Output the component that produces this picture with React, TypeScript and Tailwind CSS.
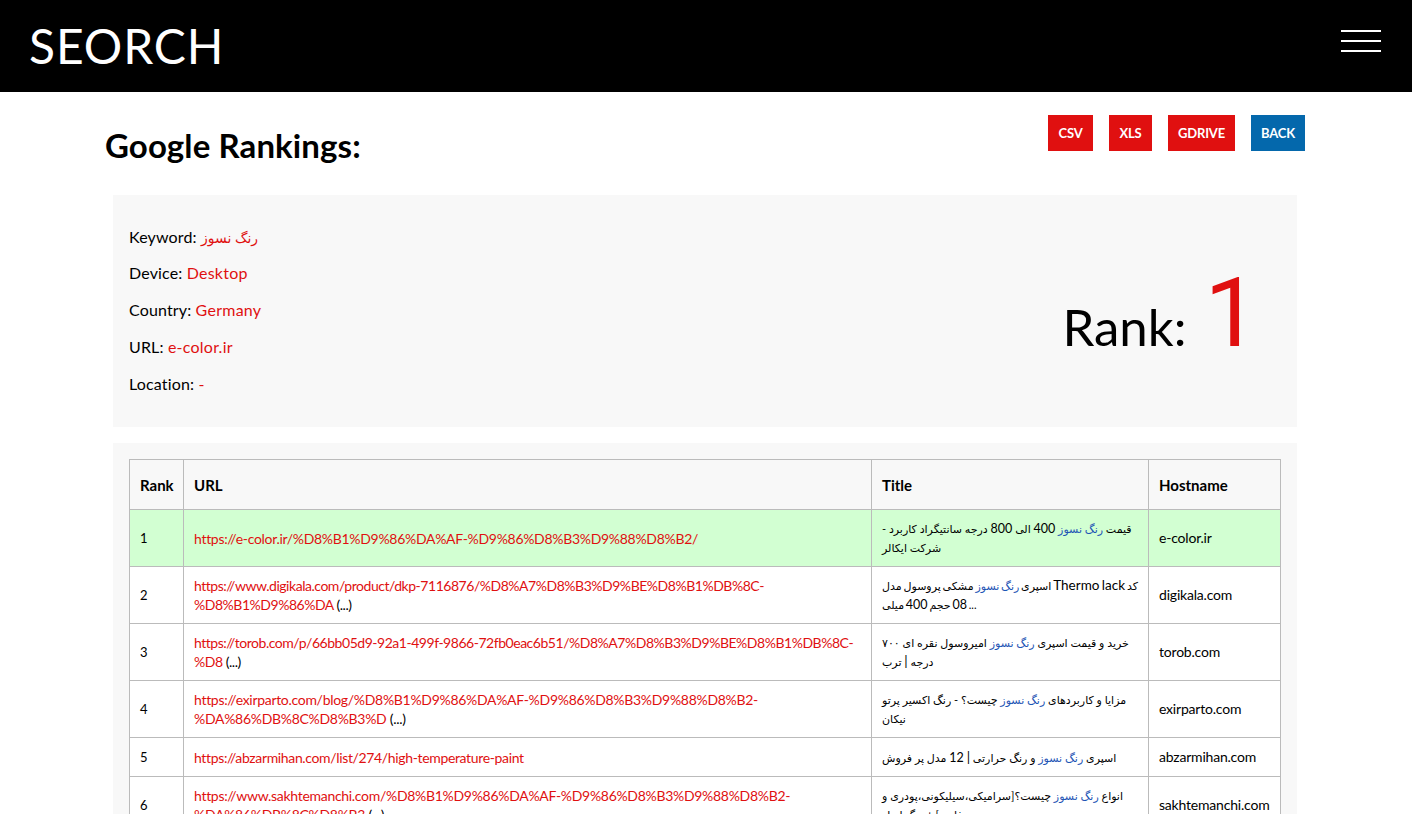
import React from "react";

const F = "font-['Lato','DejaVu_Sans',sans-serif]";
const K = () => <b className="font-normal text-[#1f55b5]">رنگ نسوز</b>;
const N = ({ children, big }: { children: React.ReactNode; big?: boolean }) => (
  <span className={big ? "text-[13.5px]" : "text-[12.5px]"}>{children}</span>
);
const rows: { r: number; title: React.ReactNode; host: string; h: string; bg?: string }[] = [
  { r: 1, title: <>قیمت <K /> <N>400</N> الی <N>800</N> درجه سانتیگراد کاربرد - شرکت ایکالر</>, host: "e-color.ir", h: "h-[57px]", bg: "bg-[#d2ffd2]" },
  { r: 2, title: <span className="whitespace-nowrap [word-spacing:-1px]">اسپری <K /> مشکی پروسول مدل <N big>Thermo lack</N> کد<br />{"\u200f"}<N>08</N> حجم <N>400</N> میلی ...</span>, host: "digikala.com", h: "h-[57px]" },
  { r: 3, title: <>خرید و قیمت اسپری <K /> امیروسول نقره ای ۷۰۰ درجه <N big>|</N> ترب</>, host: "torob.com", h: "h-[57px]" },
  { r: 4, title: <>مزایا و کاربردهای <K /> چیست؟ - رنگ اکسیر پرتو نیکان</>, host: "exirparto.com", h: "h-[57px]" },
  { r: 5, title: <>اسپری <K /> و رنگ حرارتی <N big>|</N> <N>12</N> مدل پر فروش</>, host: "abzarmihan.com", h: "h-[39px]" },
  { r: 6, title: <>انواع <K /> چیست؟[سرامیکی،سیلیکونی،پودری و فلزی] + رنگ ایزار</>, host: "sakhtemanchi.com", h: "h-[57px]" },
];
const urls: [string, string, string][] = [
  ["https://e-color.ir/%D8%B1%D9%86%DA%AF-%D9%86%D8%B3%D9%88%D8%B2/", "", "tracking-[-0.3px]"],
  ["https://www.digikala.com/product/dkp-7116876/%D8%A7%D8%B3%D9%BE%D8%B1%DB%8C-", "%D8%B1%D9%86%DA", "tracking-[-0.47px]"],
  ["https://torob.com/p/66bb05d9-92a1-499f-9866-72fb0eac6b51/%D8%A7%D8%B3%D9%BE%D8%B1%DB%8C-", "%D8", "tracking-[-0.47px]"],
  ["https://exirparto.com/blog/%D8%B1%D9%86%DA%AF-%D9%86%D8%B3%D9%88%D8%B2-", "%DA%86%DB%8C%D8%B3%D", "tracking-[-0.3px]"],
  ["https://abzarmihan.com/list/274/high-temperature-paint", "", "tracking-[-0.35px]"],
  ["https://www.sakhtemanchi.com/%D8%B1%D9%86%DA%AF-%D9%86%D8%B3%D9%88%D8%B2-", "%DA%86%DB%8C%D8%B3", "tracking-[-0.3px]"],
];

function Field({ label, value }: { label: string; value: string }) {
  return (
    <p className="mb-[13px] h-6 text-[16px] leading-6 tracking-[0.15px] text-black">
      {label}: <span className="tracking-[0.25px] text-[#e01010]">{value}</span>
    </p>
  );
}
function Btn({ children, w, blue }: { children: React.ReactNode; w: string; blue?: boolean }) {
  return (
    <a className={`flex h-9 items-center justify-center pt-[2px] text-[13px] font-bold tracking-[-0.2px] text-white ${w} ${blue ? "bg-[#0468ac]" : "bg-[#e01010]"}`}>{children}</a>
  );
}

export default function App() {
  return (
    <div className={`${F} h-screen overflow-hidden bg-white text-black`}>
      <header className="flex h-[92px] items-start justify-between bg-black pl-[29px] pr-[31px]">
        <div className="mt-[17px] text-[48px] leading-[58px] font-normal tracking-[0.9px] text-white">SEORCH</div>
        <div className="mt-[30px] flex w-10 flex-col gap-2">
          <span className="h-0.5 bg-white" />
          <span className="h-0.5 bg-white" />
          <span className="h-0.5 bg-white" />
        </div>
      </header>
      <main className="pl-[105px] pr-[107px]">
        <div className="flex h-[103px] items-start justify-between">
          <h1 className="mt-[33px] text-[33px] leading-10 font-bold tracking-[0.1px]">Google Rankings:</h1>
          <div className="mt-[23px] flex gap-4">
            <Btn w="w-[45px]">CSV</Btn>
            <Btn w="w-[43px]">XLS</Btn>
            <Btn w="w-[67px]">GDRIVE</Btn>
            <Btn w="w-[54px]" blue>BACK</Btn>
          </div>
        </div>
        <section className="mx-2 flex h-[232px] justify-between bg-[#f8f8f8] pl-4 pr-[38px] pt-[30px]">
          <div>
            <p className="mb-3 h-6 text-[16px] leading-6 tracking-[0.15px]">
              Keyword: <span className="text-[14px] tracking-normal text-[#e01010]">رنگ نسوز</span>
            </p>
            <Field label="Device" value="Desktop" />
            <Field label="Country" value="Germany" />
            <Field label="URL" value="e-color.ir" />
            <Field label="Location" value="-" />
          </div>
          <div className="flex items-baseline gap-[18px] self-start pt-[52px]">
            <span className="text-[51px] leading-[72px]">Rank:</span>
            <span className="font-['Roboto',sans-serif] text-[97px] leading-[72px] font-normal text-[#e01010]">1</span>
          </div>
        </section>
        <section className="mx-2 mt-4 bg-[#f8f8f8] p-4">
          <table className="w-full table-fixed border-collapse bg-white text-[14px]">
            <colgroup>
              <col className="w-[54px]" />
              <col className="w-[688px]" />
              <col className="w-[277px]" />
              <col />
            </colgroup>
            <thead>
              <tr className="h-[50px] bg-[#f8f8f8] text-left text-[15px] font-bold">
                <th className="border border-[#bbbbbb] px-2.5 pt-0.5">Rank</th>
                <th className="border border-[#bbbbbb] px-2.5 pt-0.5">URL</th>
                <th className="border border-[#bbbbbb] px-2.5 pt-0.5">Title</th>
                <th className="border border-[#bbbbbb] px-2.5 pt-0.5">Hostname</th>
              </tr>
            </thead>
            <tbody>
              {rows.map((row, i) => (
                <tr key={row.r} className={`${row.h} ${row.bg ?? ""}`}>
                  <td className="border border-[#bbbbbb] px-2.5 pt-0.5 text-[13px]">{row.r}</td>
                  <td className={`whitespace-nowrap border border-[#bbbbbb] px-2.5 leading-[19px] text-[#e01010] ${urls[i][2]}`}>
                    {urls[i][0]}
                    {urls[i][1] && <br />}
                    {urls[i][1]}
                    {urls[i][1] && <span className="text-black"> (...)</span>}
                  </td>
                  <td className="border border-[#bbbbbb] px-2.5 text-[11px] leading-[19px]">{row.title}</td>
                  <td className="border border-[#bbbbbb] px-2.5 pb-0.5 tracking-[-0.2px]">{row.host}</td>
                </tr>
              ))}
            </tbody>
          </table>
        </section>
      </main>
    </div>
  );
}
